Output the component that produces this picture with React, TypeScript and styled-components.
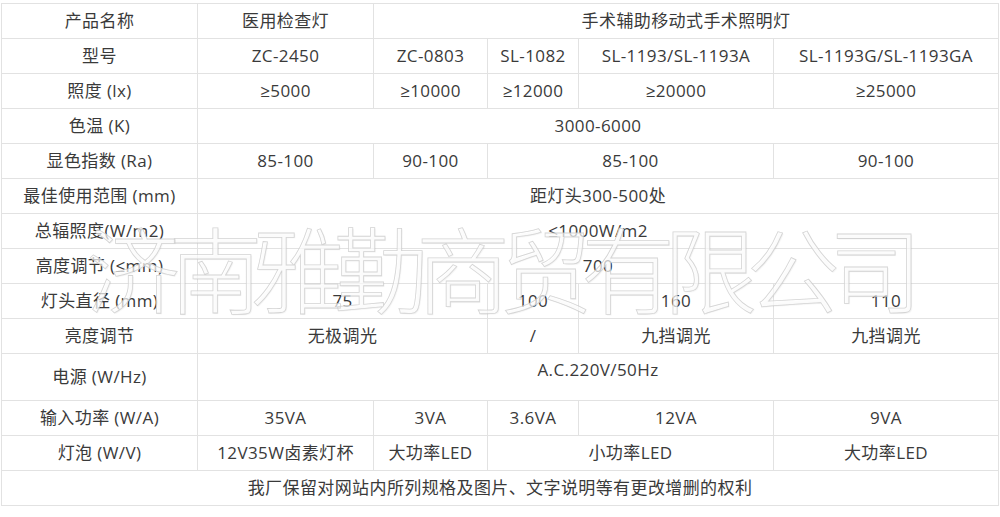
import React from 'react';
import styled, { createGlobalStyle } from 'styled-components';

const GlobalStyle = createGlobalStyle`
  html, body {
    margin: 0;
    padding: 0;
    background: #ffffff;
  }
  body {
    font-family: "Open Sans", "Noto Sans CJK SC", sans-serif;
  }
`;

const Page = styled.div`
  position: relative;
  width: 1000px;
  height: 517px;
  padding: 3px 0 0 1px;
  box-sizing: border-box;
  overflow: hidden;
`;

const SpecTable = styled.table`
  width: 997px;
  border-collapse: collapse;
  table-layout: fixed;
  color: #3a3a3a;
  font-size: 17px;
  letter-spacing: 0.4px;
`;

const Row = styled.tr<{ $tall?: boolean }>`
  height: ${({ $tall }) => ($tall ? '47px' : '35px')};
`;

const Cell = styled.td<{ $raised?: boolean }>`
  border: 1px solid #e2e2e2;
  padding: 0 0 ${({ $raised }) => ($raised ? '14px' : '0')};
  text-align: center;
  vertical-align: middle;
  white-space: nowrap;
  line-height: 20px;
`;

const Watermark = styled.div`
  position: absolute;
  left: 86px;
  top: 219px;
  font-family: "Noto Sans CJK SC", sans-serif;
  font-weight: 300;
  font-size: 94px;
  line-height: 1;
  letter-spacing: -11.5px;
  color: rgba(255, 255, 255, 0.7);
  -webkit-text-stroke: 0.8px rgba(205, 205, 205, 0.85);
  text-shadow: 1px 1px 1px rgba(0, 0, 0, 0.05);
  white-space: nowrap;
  pointer-events: none;
`;

type Item = [string, number?];

const rows: { label: string; cells: Item[]; tall?: boolean }[] = [
  { label: '产品名称', cells: [['医用检查灯'], ['手术辅助移动式手术照明灯', 4]] },
  { label: '型号', cells: [['ZC-2450'], ['ZC-0803'], ['SL-1082'], ['SL-1193/SL-1193A'], ['SL-1193G/SL-1193GA']] },
  { label: '照度 (lx)', cells: [['≥5000'], ['≥10000'], ['≥12000'], ['≥20000'], ['≥25000']] },
  { label: '色温 (K)', cells: [['3000-6000', 5]] },
  { label: '显色指数 (Ra)', cells: [['85-100'], ['90-100'], ['85-100', 2], ['90-100']] },
  { label: '最佳使用范围 (mm)', cells: [['距灯头300-500处', 5]] },
  { label: '总辐照度(W/m2)', cells: [['≤1000W/m2', 5]] },
  { label: '高度调节 (≤mm)', cells: [['700', 5]] },
  { label: '灯头直径 (mm)', cells: [['75', 2], ['100'], ['160'], ['110']] },
  { label: '亮度调节', cells: [['无极调光', 2], ['/'], ['九挡调光'], ['九挡调光']] },
  { label: '电源 (W/Hz)', cells: [['A.C.220V/50Hz', 5]], tall: true },
  { label: '输入功率 (W/A)', cells: [['35VA'], ['3VA'], ['3.6VA'], ['12VA'], ['9VA']] },
  { label: '灯泡 (W/V)', cells: [['12V35W卤素灯杯'], ['大功率LED'], ['小功率LED', 2], ['大功率LED']] },
];

const widths = [196, 176, 114, 91, 195, 225];

export default function App() {
  return (
    <Page>
      <GlobalStyle />
      <SpecTable>
        <colgroup>
          {widths.map((w, i) => (
            <col key={i} style={{ width: w }} />
          ))}
        </colgroup>
        <tbody>
          {rows.map((row) => (
            <Row key={row.label} $tall={row.tall}>
              <Cell>{row.label}</Cell>
              {row.cells.map(([text, span], i) => (
                <Cell key={i} colSpan={span ?? 1} $raised={row.tall}>
                  {text}
                </Cell>
              ))}
            </Row>
          ))}
          <Row>
            <Cell colSpan={6}>我厂保留对网站内所列规格及图片、文字说明等有更改增删的权利</Cell>
          </Row>
        </tbody>
      </SpecTable>
      <Watermark>济南雅勤商贸有限公司</Watermark>
    </Page>
  );
}
